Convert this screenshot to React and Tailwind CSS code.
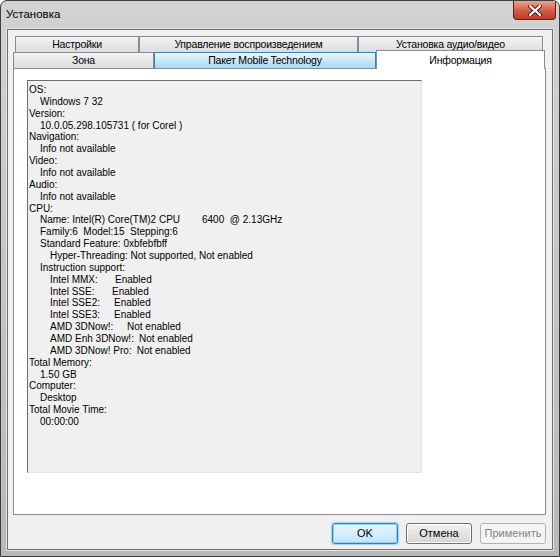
import React from 'react';

const font = { fontFamily: '"Liberation Sans", Arial, sans-serif' };

// text rows of the info box: [indent level, content]
const rows = [
  [0, 'OS:'],
  [1, 'Windows 7 32'],
  [0, 'Version:'],
  [1, '10.0.05.298.105731 ( for Corel )'],
  [0, 'Navigation:'],
  [1, 'Info not available'],
  [0, 'Video:'],
  [1, 'Info not available'],
  [0, 'Audio:'],
  [1, 'Info not available'],
  [0, 'CPU:'],
  [1, 'name'],
  [1, 'Family:6  Model:15  Stepping:6'],
  [1, 'Standard Feature: 0xbfebfbff'],
  [2, 'Hyper-Threading: Not supported, Not enabled'],
  [1, 'Instruction support:'],
  [2, ['Intel MMX:', 'Enabled', 'w-[65px]']],
  [2, ['Intel SSE:', 'Enabled', 'w-[62px]']],
  [2, ['Intel SSE2:', 'Enabled', 'w-[64px]']],
  [2, ['Intel SSE3:', 'Enabled', 'w-[64px]']],
  [2, ['AMD 3DNow!:', 'Not enabled', 'w-[77px]']],
  [2, ['AMD Enh 3DNow!:', 'Not enabled', 'min-w-[85px] pr-[5px]']],
  [2, ['AMD 3DNow! Pro:', 'Not enabled', 'min-w-[83px] pr-[5px]']],
  [0, 'Total Memory:'],
  [1, '1.50 GB'],
  [0, 'Computer:'],
  [1, 'Desktop'],
  [0, 'Total Movie Time:'],
  [1, '00:00:00'],
];

const indents = ['pl-0', 'pl-[11px]', 'pl-[21px]'];

function Row({ level, content }) {
  let inner;
  if (content === 'name') {
    inner = (
      <>
        <span className="inline-block w-[162px]">Name: Intel(R) Core(TM)2 CPU</span>
        <span>6400  @ 2.13GHz</span>
      </>
    );
  } else if (Array.isArray(content)) {
    inner = (
      <>
        <span className={'inline-block ' + content[2]}>{content[0]}</span>
        <span>{content[1]}</span>
      </>
    );
  } else {
    inner = content;
  }
  return <div className={'whitespace-pre h-[11.86px] ' + indents[level]}>{inner}</div>;
}

function Tab({ label, className }) {
  return (
    <div
      className={
        'h-[16px] flex items-center justify-center border-t border-l border-r border-[#898c95] bg-gradient-to-b from-[#f3f3f3] to-[#dcdcdc] text-[10.5px] tracking-[-0.2px] text-black ' +
        className
      }
    >
      {label}
    </div>
  );
}

function Button({ children, kind }) {
  const styles = {
    default:
      'border-[#3c7fb1] bg-gradient-to-b from-[#eaf6fd] to-[#bee6fd] text-black shadow-[inset_0_0_0_1px_#8fd0f4,0_0_1px_1px_#9bd3f5]',
    normal: 'border-[#707070] bg-gradient-to-b from-[#f2f2f2] to-[#d5d5d5] text-black shadow-[inset_0_0_0_1px_#fcfcfc]',
    disabled: 'border-[#adb2b5] bg-[#f4f4f4] text-[#838383]',
  };
  return (
    <div
      className={
        'w-[66px] h-[21px] rounded-[3px] border flex items-center justify-center text-[11px] ' + styles[kind]
      }
    >
      {children}
    </div>
  );
}

export default function App() {
  return (
    <div
      style={font}
      className="relative w-[560px] h-[557px] flex flex-col border border-[#3d3d3d] rounded-t-[7px] bg-gradient-to-b from-[#d2d2d2] to-[#b8b8b8] overflow-hidden"
    >
      {/* title bar */}
      <div className="h-[28px] flex items-center pl-[5px] text-[11.5px] text-black">Установка</div>
      <div className="absolute top-0 right-[3px] w-[43px] h-[19px] rounded-b-[4px] border border-t-0 border-[#5b2119] bg-gradient-to-b from-[#e8a593] via-[#d35f4b] to-[#c23a24] flex items-center justify-center">
        <svg width="14" height="11" viewBox="0 0 14 11">
          <path d="M2 1 L12 10 M12 1 L2 10" stroke="#4a1a12" strokeWidth="4" strokeLinecap="round" />
          <path d="M2 1 L12 10 M12 1 L2 10" stroke="#ffffff" strokeWidth="2.2" strokeLinecap="round" />
        </svg>
      </div>

      {/* client area */}
      <div className="flex-1 mx-[6px] mb-[6px] border border-[#6e6e6e] bg-[#f0f0f0] flex flex-col pl-[5px] pr-[6px] pt-[6px] shadow-[0_0_0_1px_#e6e6e6]">
        <div className="flex pl-[2px]">
          <Tab label="Настройки" className="w-[124px]" />
          <Tab label="Управление воспроизведением" className="w-[219px]" />
          <Tab label="Установка аудио/видео" className="w-[185px]" />
        </div>
        <div className="flex items-end h-[16px]">
          <Tab label="Зона" className="w-[141px]" />
          <Tab
            label="Пакет Mobile Technology"
            className="w-[222px] !border-[#3c7fb1] !from-[#eaf6fd] !to-[#a7d9f5]"
          />
          <div className="relative z-10 w-[169px] h-[19px] -mb-px border-t border-l border-r border-[#898c95] bg-white text-[10.5px] tracking-[-0.2px] text-black flex justify-center pt-[2px]">
            Информация
          </div>
        </div>

        {/* tab page */}
        <div className="h-[447px] border border-[#898c95] bg-white pl-[13px] pt-[11px]">
          <div className="w-[395px] h-[393px] border-l border-t border-[#6d6d6d] border-r border-b border-r-[#e3e3e3] border-b-[#e3e3e3] bg-[#f0f0f0] pl-[1px] pt-[3px] text-[10px] text-black leading-[11.86px]">
            {rows.map(([level, content], i) => (
              <Row key={i} level={level} content={content} />
            ))}
          </div>
        </div>

        {/* buttons */}
        <div className="flex justify-end gap-[8px] mt-[8px]">
          <Button kind="default">OK</Button>
          <Button kind="normal">Отмена</Button>
          <Button kind="disabled">Применить</Button>
        </div>
      </div>
    </div>
  );
}
